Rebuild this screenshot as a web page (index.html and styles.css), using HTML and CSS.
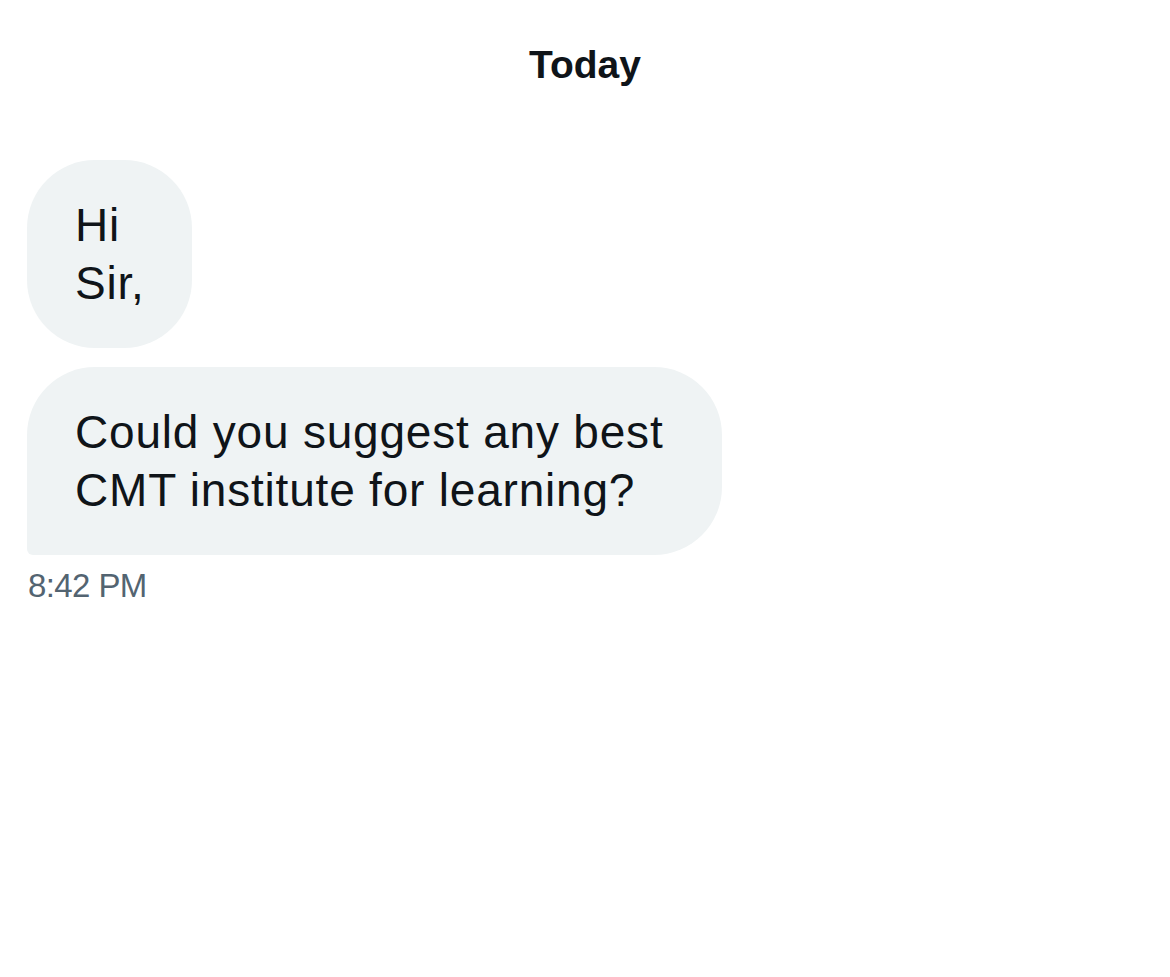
FILE: index.html
```html
<!DOCTYPE html>
<html>
<head>
<meta charset="utf-8">
<link rel="stylesheet" href="styles.css">
</head>
<body>
<div class="conv">
  <div class="day">Today</div>
  <div class="messages">
    <div class="bubble first">Hi<br>Sir,</div>
    <div class="bubble last">Could you suggest any best<br>CMT institute for learning?</div>
    <div class="time">8:42 PM</div>
  </div>
</div>
</body>
</html>
```
FILE: styles.css
```css
html, body {
  margin: 0;
  padding: 0;
  background: #ffffff;
}
body {
  font-family: "Liberation Sans", Arial, sans-serif;
  color: #0f1419;
}
.conv {
  display: flex;
  flex-direction: column;
  padding: 0 27px;
}
.day {
  text-align: center;
  font-weight: bold;
  font-size: 39px;
  line-height: 44px;
  padding-top: 43px;
  height: 160px;
  box-sizing: border-box;
}
.messages {
  display: flex;
  flex-direction: column;
  align-items: flex-start;
  gap: 19px;
}
.bubble {
  background: #eff3f4;
  font-size: 46px;
  line-height: 58px;
  letter-spacing: 0.8px;
  padding: 36px 47px 36px 48px;
  border-radius: 68px;
}
.bubble.last {
  padding-right: 58px;
  border-bottom-left-radius: 6px;
}
.time {
  margin-top: -8px;
  font-size: 33px;
  line-height: 40px;
  color: #536471;
  letter-spacing: -0.6px;
  padding-left: 1px;
}
```
